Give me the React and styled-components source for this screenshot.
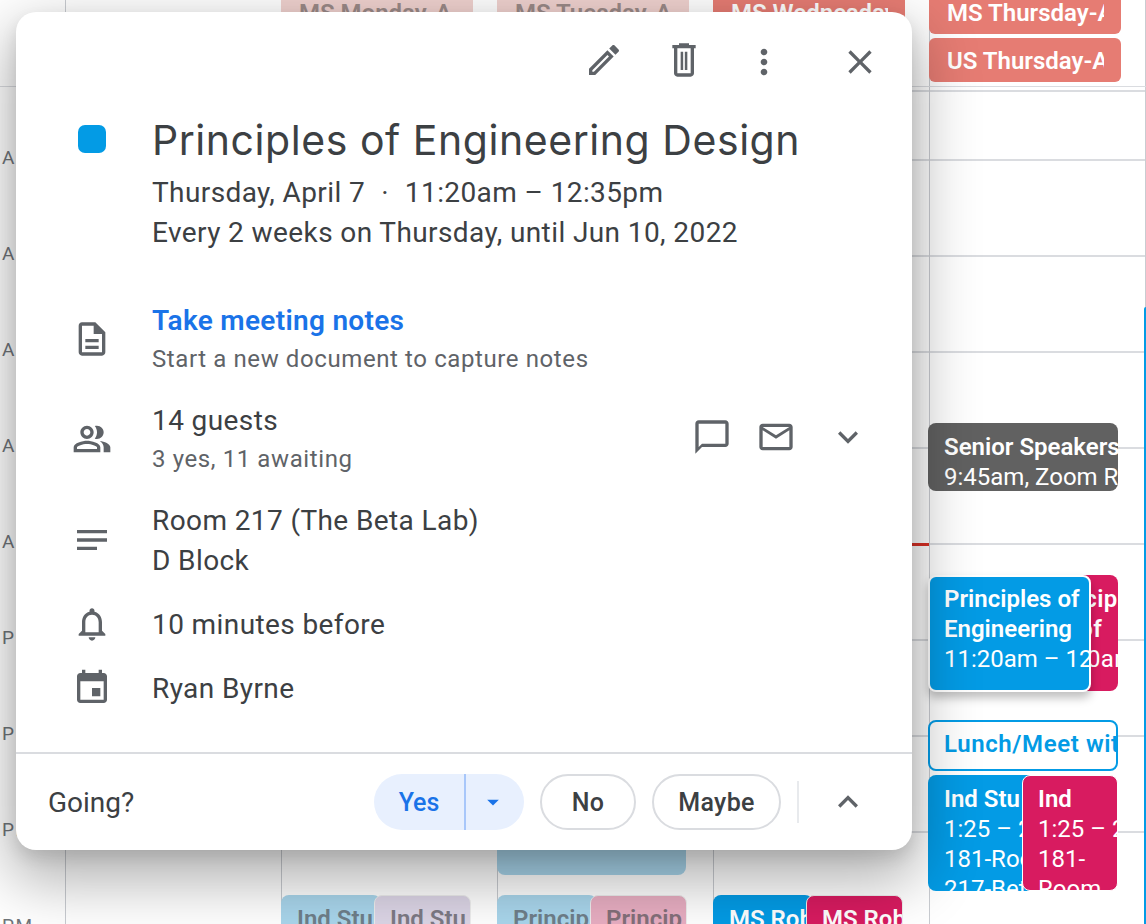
import React from "react";
import styled, { createGlobalStyle } from "styled-components";

const GlobalStyle = createGlobalStyle`
  html, body {
    margin: 0;
    padding: 0;
    background: #fff;
    font-family: Roboto, "Liberation Sans", sans-serif;
  }
`;

const Page = styled.div`
  height: 924px;
  overflow: hidden;
  position: relative;
  width: 1146px;
`;

const AllDayRow = styled.div`
  border-bottom: 1px solid #dadce0;
  display: grid;
  grid-template-columns: 65px repeat(5, 216px) 1fr;
  height: 86px;
  overflow: hidden;
`;

const AllDayCell = styled.div`
  border-left: 1px solid #c9ccd1;
  display: flex;
  flex-direction: column;
  gap: 4px;
  margin-top: -10px;
`;

const Chip = styled.div`
  background: ${props => (props.$faded ? "#f0d2cf" : "#e67c73")};
  border-radius: 6px;
  box-sizing: border-box;
  color: ${props => (props.$faded ? "#9b8a88" : "#fff")};
  flex: none;
  height: 44px;
  margin-left: -1px;
  padding: 0 17px 0 18px;
  width: 192px;
`;

const ChipText = styled.div`
  font-size: 24px;
  font-weight: 600;
  line-height: 46px;
  overflow: hidden;
  white-space: nowrap;
`;

const TimeBody = styled.div`
  background-image: repeating-linear-gradient(to bottom, #dadce0 0, #dadce0 2px, transparent 2px, transparent 96px);
  background-position: 0 72px;
  display: grid;
  grid-template-columns: 65px repeat(5, 216px) 1fr;
  height: 837px;
`;

const Gutter = styled.div`
  background: #fff;
  color: #70757a;
  font-size: 19px;
  letter-spacing: 1.5px;
  padding-top: 23px;
  padding-left: 2px;
`;

const HourLabel = styled.div`
  height: 96px;
  line-height: 96px;
`;

const DayColumn = styled.div`
  border-left: 1px solid #c9ccd1;
  position: relative;
`;

const Event = styled.div`
  background: ${props => props.$bg};
  border: ${props => props.$bw || 0}px solid ${props => props.$bc || "transparent"};
  border-radius: 8px;
  box-shadow: ${props => (props.$raised ? "0 6px 10px 0 rgba(0, 0, 0, 0.25)" : "none")};
  box-sizing: border-box;
  color: ${props => props.$color || "#fff"};
  font-size: 24px;
  height: ${props => props.$height}px;
  left: ${props => props.$left}px;
  letter-spacing: ${props => props.$spacing || 0}px;
  line-height: 30px;
  overflow: hidden;
  padding: ${props => 9 - (props.$bw || 0)}px 0 0 ${props => 16 - (props.$bw || 0)}px;
  position: absolute;
  top: ${props => props.$top}px;
  width: ${props => props.$width}px;
  z-index: ${props => props.$layer || 1};
`;

const EventTitle = styled.div`
  font-weight: 600;
  white-space: nowrap;
`;

const EventLine = styled.div`
  white-space: nowrap;
`;

const NowMarker = styled.div`
  background: #d93025;
  height: 3px;
  left: -1px;
  position: absolute;
  top: 456px;
  width: 216px;
`;

const EdgeEvent = styled.div`
  background: #039be5;
  border-top-left-radius: 4px;
  bottom: 0;
  left: -2px;
  position: absolute;
  top: 220px;
  width: 2px;
`;

const Dialog = styled.div`
  background: #fff;
  border-radius: 20px;
  box-shadow: 0 24px 60px 8px rgba(0, 0, 0, 0.3), 0 8px 16px rgba(0, 0, 0, 0.1);
  color: #3c4043;
  display: flex;
  flex-direction: column;
  height: 838px;
  left: 16px;
  position: absolute;
  top: 12px;
  width: 896px;
  z-index: 10;
`;

const Toolbar = styled.div`
  align-items: flex-start;
  display: flex;
  gap: 40px;
  height: 40px;
  justify-content: flex-end;
  padding: 28px 32px 0 0;
`;

const Icon = styled.svg`
  color: ${props => props.$color || "#5f6368"};
  display: block;
  fill: currentColor;
  flex: none;
  height: ${props => props.$size || 40}px;
  margin-left: ${props => props.$ml || 0}px;
  margin-top: ${props => props.$mt || 0}px;
  width: ${props => props.$size || 40}px;
`;

const Row = styled.div`
  align-items: center;
  display: grid;
  column-gap: 40px;
  grid-template-columns: 40px 1fr auto;
  margin-top: ${props => props.$mt}px;
  padding: 0 44px 0 56px;
`;

const TitleRow = styled(Row)`
  align-items: start;
`;

const ColorDot = styled.div`
  background: #039be5;
  border-radius: 7px;
  height: 28px;
  margin: 13px 0 0 6px;
  width: 28px;
`;

const Title = styled.div`
  font-family: Inter, Roboto, sans-serif;
  font-size: 41px;
  font-weight: 400;
  letter-spacing: 0.55px;
  line-height: 56px;
  margin-bottom: 4px;
  white-space: nowrap;
`;

const Line = styled.div`
  font-size: 28px;
  letter-spacing: 0.4px;
  line-height: 38px;
  padding-top: 2px;
  white-space: nowrap;
`;

const Separator = styled.span`
  margin: 0 16px;
`;

const LinkLine = styled.div`
  color: #1a73e8;
  font-size: 28px;
  font-weight: 600;
  letter-spacing: 0.3px;
  line-height: 38px;
  padding-top: 2px;
`;

const SubLine = styled.div`
  color: #5f6368;
  font-size: 24px;
  letter-spacing: 0.6px;
  line-height: 38px;
`;

const Actions = styled.div`
  align-items: center;
  display: flex;
  gap: 24px;
  margin-bottom: 4px;
`;

const Footer = styled.div`
  align-items: center;
  border-top: 2px solid #dadce0;
  display: flex;
  height: 96px;
  margin-top: auto;
  padding: 0 44px 0 32px;
`;

const GoingLabel = styled.div`
  flex: 1;
  font-size: 28px;
`;

const YesGroup = styled.div`
  background: #e8f0fe;
  border-radius: 28px;
  color: #1a73e8;
  display: flex;
  height: 56px;
  width: 150px;
`;

const YesButton = styled.div`
  border-right: 2px solid #a8c7fa;
  font-size: 25px;
  font-weight: 500;
  line-height: 58px;
  text-align: center;
  width: 90px;
`;

const YesCaret = styled.div`
  align-items: center;
  display: flex;
  flex: 1;
  justify-content: center;
  padding-right: 4px;
`;

const Pill = styled.div`
  border: 2px solid #dadce0;
  border-radius: 28px;
  box-sizing: border-box;
  font-size: 25px;
  font-weight: 500;
  height: 56px;
  letter-spacing: 0.3px;
  line-height: 54px;
  margin-left: 16px;
  text-align: center;
  width: ${props => props.$width}px;
`;

const FooterDivider = styled.div`
  background: #e8eaed;
  height: 42px;
  margin: 0 29px 0 16px;
  width: 2px;
`;

const paths = {
  edit: "M14.06 9.02l.92.92L5.92 19H5v-.92l9.06-9.06M17.66 3c-.25 0-.51.1-.7.29l-1.83 1.83 3.75 3.75 1.83-1.83c.39-.39.39-1.02 0-1.41l-2.34-2.34c-.2-.2-.45-.29-.71-.29zm-3.6 3.19L3 17.25V21h3.75L17.81 9.94l-3.75-3.75z",
  trash: "M15 3V2H9v1H5v2h1v15c0 1.1.9 2 2 2h8c1.1 0 2-.9 2-2V5h1V3h-4zm1 17H8V5h8v15zM10 7h1.5v11H10zm2.5 0H14v11h-1.5z",
  more: "M12 8c1.1 0 2-.9 2-2s-.9-2-2-2-2 .9-2 2 .9 2 2 2zm0 2c-1.1 0-2 .9-2 2s.9 2 2 2 2-.9 2-2-.9-2-2-2zm0 6c-1.1 0-2 .9-2 2s.9 2 2 2 2-.9 2-2-.9-2-2-2z",
  close: "M19 6.41L17.59 5 12 10.59 6.41 5 5 6.41 10.59 12 5 17.59 6.41 19 12 13.41 17.59 19 19 17.59 13.41 12z",
  doc: "M14 2H6c-1.1 0-2 .9-2 2v16c0 1.1.9 2 2 2h12c1.1 0 2-.9 2-2V8l-6-6zm4 18H6V4h7v5h5v11zM8 12h8v2H8zm0 4h8v2H8z",
  people: "M15 8c0-1.42-.5-2.73-1.33-3.76.42-.14.86-.24 1.33-.24 2.21 0 4 1.79 4 4s-1.79 4-4 4c-.43 0-.84-.09-1.23-.21-.03-.01-.06-.02-.1-.03C14.5 10.73 15 9.42 15 8zm1.66 5.13C18.03 14.06 19 15.32 19 17v3h4v-3c0-2.18-3.58-3.47-6.34-3.87zM9 4c-2.21 0-4 1.79-4 4s1.79 4 4 4 4-1.79 4-4-1.79-4-4-4zm0 6c-1.1 0-2-.9-2-2s.9-2 2-2 2 .9 2 2-.9 2-2 2zM9 13c-2.67 0-8 1.34-8 4v3h16v-3c0-2.66-5.33-4-8-4zm6 5H3v-.99C3.2 16.29 6.3 15 9 15s5.8 1.29 6 2v1z",
  notes: "M3 18h12v-2H3v2zM3 6v2h18V6H3zm0 7h18v-2H3v2z",
  bell: "M18 16v-5c0-3.07-1.63-5.64-4.5-6.32V4c0-.83-.67-1.5-1.5-1.5s-1.5.67-1.5 1.5v.68C7.64 5.36 6 7.92 6 11v5l-2 2v1h16v-1l-2-2zm-2 1H8v-6c0-2.48 1.51-4.5 4-4.5s4 2.02 4 4.5v6zM12 22c1.1 0 2-.9 2-2h-4c0 1.1.9 2 2 2z",
  calendar: "M17 12h-5v5h5v-5zM16 1v2H8V1H6v2H5c-1.11 0-1.99.9-1.99 2L3 19c0 1.1.89 2 2 2h14c1.1 0 2-.9 2-2V5c0-1.1-.9-2-2-2h-1V1h-2zm3 18H5V8h14v11z",
  comment: "M20 2H4c-1.1 0-2 .9-2 2v18l4-4h14c1.1 0 2-.9 2-2V4c0-1.1-.9-2-2-2zm0 14H6l-2 2V4h16v12z",
  mail: "M20 4H4c-1.1 0-1.99.9-1.99 2L2 18c0 1.1.9 2 2 2h16c1.1 0 2-.9 2-2V6c0-1.1-.9-2-2-2zm0 14H4V8l8 5 8-5v10zm-8-7L4 6h16l-8 5z",
  down: "M16.59 8.59L12 13.17 7.41 8.59 6 10l6 6 6-6z",
  up: "M12 8l-6 6 1.41 1.41L12 10.83l4.59 4.58L18 14z",
  caret: "M7 10l5 5 5-5z",
};

const MaterialIcon = ({ name, ...rest }) => (
  <Icon viewBox="0 0 24 24" {...rest}>
    <path d={paths[name]} />
  </Icon>
);

const hours = ["AM", "AM", "AM", "AM", "AM", "PM", "PM", "PM", "PM"];

// tops are measured from the top of the time grid, which starts at y=87
const columns = [
  [
    { top: 808, left: -1, width: 100, height: 60, bg: "#a9d6ec", color: "#6f7f8a", titles: ["Ind Stu"] },
    { top: 808, left: 92, width: 97, height: 60, bg: "#dcd5e6", color: "#7d7a85", bw: 1, bc: "#eee", titles: ["Ind Stu"], layer: 2 },
  ],
  [
    { top: 700, left: -1, width: 189, height: 88, bg: "#a9d6ec" },
    { top: 808, left: -1, width: 100, height: 60, bg: "#a9d6ec", color: "#6f7f8a", titles: ["Princip"] },
    { top: 808, left: 92, width: 97, height: 60, bg: "#e8aec2", color: "#84707a", bw: 1, bc: "#eee", titles: ["Princip"], layer: 2 },
  ],
  [
    { top: 808, left: -1, width: 100, height: 60, bg: "#039be5", titles: ["MS Rob"] },
    { top: 808, left: 92, width: 97, height: 60, bg: "#d81b60", titles: ["MS Rob"], bw: 1, bc: "#eee", layer: 2 },
  ],
  [
    { top: 336, left: -2, width: 190, height: 68, bg: "#616161", titles: ["Senior Speakers"], lines: ["9:45am, Zoom Room"] },
    { top: 488, left: 93, width: 95, height: 116, bg: "#d81b60", titles: ["Principles", "Ins of"], lines: ["11:20am – 12:35pm"], spacing: 0.4 },
    { top: 488, left: -2, width: 163, height: 117, bg: "#039be5", titles: ["Principles of", "Engineering"], lines: ["11:20am – 12:35pm"], bw: 2, bc: "#fff", raised: true, layer: 2 },
    { top: 633, left: -2, width: 190, height: 51, bg: "#fff", color: "#039be5", titles: ["Lunch/Meet with"], bw: 2, bc: "#039be5", spacing: 0.6 },
    { top: 688, left: -2, width: 120, height: 116, bg: "#039be5", titles: ["Ind Stu"], lines: ["1:25 – 2:40pm", "181-Room", "217-Beta"] },
    { top: 688, left: 92, width: 96, height: 116, bg: "#d81b60", titles: ["Ind"], lines: ["1:25 – 2:40pm", "181-", "Room"], bw: 1, bc: "#fff", layer: 2 },
  ],
];

const renderEvent = (ev, idx) => (
  <Event
    key={idx}
    $top={ev.top}
    $left={ev.left}
    $width={ev.width}
    $height={ev.height}
    $bg={ev.bg}
    $color={ev.color}
    $bw={ev.bw}
    $bc={ev.bc}
    $raised={ev.raised}
    $layer={ev.layer}
    $spacing={ev.spacing}
  >
    {(ev.titles || []).map(line => (
      <EventTitle key={line}>{line}</EventTitle>
    ))}
    {(ev.lines || []).map(line => (
      <EventLine key={line}>{line}</EventLine>
    ))}
  </Event>
);

const allDay = [
  [],
  [{ label: "MS Monday-A", faded: true }],
  [{ label: "MS Tuesday-A", faded: true }],
  [{ label: "MS Wednesday-A" }],
  [{ label: "MS Thursday-A" }, { label: "US Thursday-A" }],
  [],
];

const App = () => {
  return (
    <Page>
      <GlobalStyle />
      <AllDayRow>
        <div />
        {allDay.map((chips, idx) => (
          <AllDayCell key={idx}>
            {chips.map(chip => (
              <Chip key={chip.label} $faded={chip.faded}>
                <ChipText>{chip.label}</ChipText>
              </Chip>
            ))}
          </AllDayCell>
        ))}
      </AllDayRow>
      <TimeBody>
        <Gutter>
          {hours.map((h, idx) => (
            <HourLabel key={idx}>{h}</HourLabel>
          ))}
        </Gutter>
        <DayColumn />
        {columns.slice(0, 3).map((events, idx) => (
          <DayColumn key={idx}>
            {events.map(renderEvent)}
            {idx === 2 && <NowMarker />}
          </DayColumn>
        ))}
        <DayColumn>{columns[3].map(renderEvent)}</DayColumn>
        <DayColumn>
          <EdgeEvent />
        </DayColumn>
      </TimeBody>

      <Dialog>
        <Toolbar>
          <MaterialIcon name="edit" />
          <MaterialIcon name="trash" />
          <MaterialIcon name="more" $mt={2} />
          <MaterialIcon name="close" $ml={16} $mt={2} />
        </Toolbar>

        <TitleRow $mt={32}>
          <ColorDot />
          <div>
            <Title>Principles of Engineering Design</Title>
            <Line>Thursday, April 7<Separator>·</Separator>11:20am – 12:35pm</Line>
            <Line>Every 2 weeks on Thursday, until Jun 10, 2022</Line>
          </div>
        </TitleRow>

        <Row $mt={48}>
          <MaterialIcon name="doc" />
          <div>
            <LinkLine>Take meeting notes</LinkLine>
            <SubLine>Start a new document to capture notes</SubLine>
          </div>
        </Row>

        <Row $mt={22}>
          <MaterialIcon name="people" />
          <div>
            <Line>14 guests</Line>
            <SubLine>3 yes, 11 awaiting</SubLine>
          </div>
          <Actions>
            <MaterialIcon name="comment" />
            <MaterialIcon name="mail" />
            <MaterialIcon name="down" $ml={8} />
          </Actions>
        </Row>

        <Row $mt={22}>
          <MaterialIcon name="notes" />
          <div>
            <Line>Room 217 (The Beta Lab)</Line>
            <Line>D Block</Line>
          </div>
        </Row>

        <Row $mt={24}>
          <MaterialIcon name="bell" />
          <Line>10 minutes before</Line>
        </Row>

        <Row $mt={24}>
          <MaterialIcon name="calendar" />
          <Line>Ryan Byrne</Line>
        </Row>

        <Footer>
          <GoingLabel>Going?</GoingLabel>
          <YesGroup>
            <YesButton>Yes</YesButton>
            <YesCaret>
              <MaterialIcon name="caret" $color="#1a73e8" $size={28} />
            </YesCaret>
          </YesGroup>
          <Pill $width={96}>No</Pill>
          <Pill $width={129}>Maybe</Pill>
          <FooterDivider />
          <MaterialIcon name="up" />
        </Footer>
      </Dialog>
    </Page>
  );
};

export default App;
